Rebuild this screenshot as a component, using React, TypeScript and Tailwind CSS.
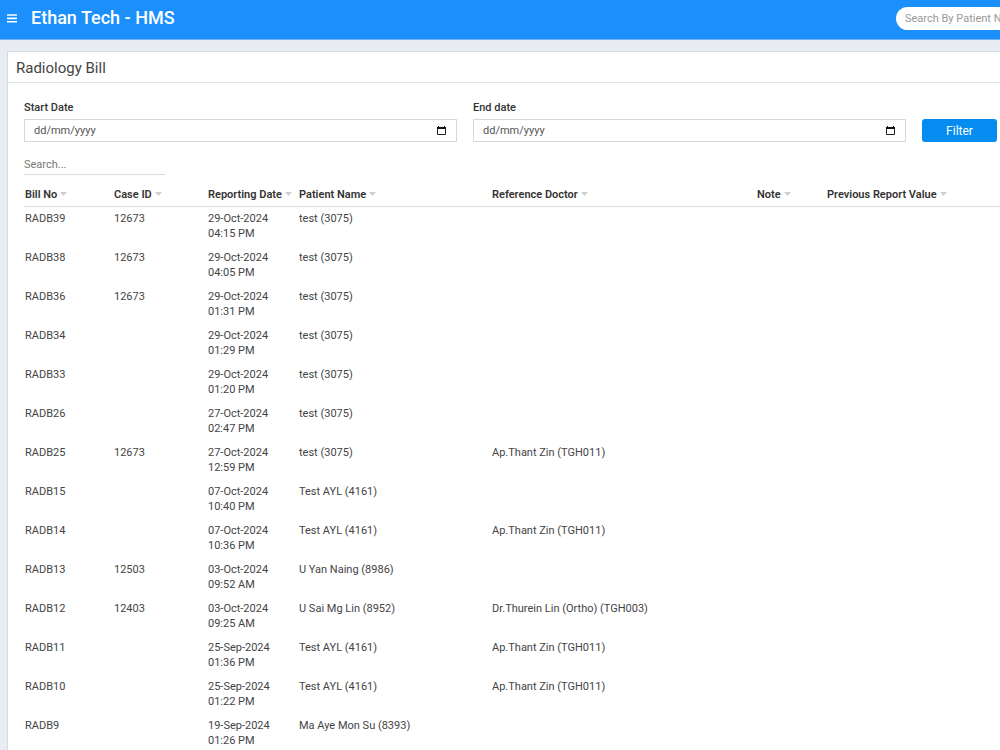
type Bill = {
  billNo: string;
  caseId?: string;
  date: string;
  time: string;
  patient: string;
  doctor?: string;
};

const bills: Bill[] = [
  { billNo: "RADB39", caseId: "12673", date: "29-Oct-2024", time: "04:15 PM", patient: "test (3075)" },
  { billNo: "RADB38", caseId: "12673", date: "29-Oct-2024", time: "04:05 PM", patient: "test (3075)" },
  { billNo: "RADB36", caseId: "12673", date: "29-Oct-2024", time: "01:31 PM", patient: "test (3075)" },
  { billNo: "RADB34", date: "29-Oct-2024", time: "01:29 PM", patient: "test (3075)" },
  { billNo: "RADB33", date: "29-Oct-2024", time: "01:20 PM", patient: "test (3075)" },
  { billNo: "RADB26", date: "27-Oct-2024", time: "02:47 PM", patient: "test (3075)" },
  { billNo: "RADB25", caseId: "12673", date: "27-Oct-2024", time: "12:59 PM", patient: "test (3075)", doctor: "Ap.Thant Zin (TGH011)" },
  { billNo: "RADB15", date: "07-Oct-2024", time: "10:40 PM", patient: "Test AYL (4161)" },
  { billNo: "RADB14", date: "07-Oct-2024", time: "10:36 PM", patient: "Test AYL (4161)", doctor: "Ap.Thant Zin (TGH011)" },
  { billNo: "RADB13", caseId: "12503", date: "03-Oct-2024", time: "09:52 AM", patient: "U Yan Naing (8986)" },
  { billNo: "RADB12", caseId: "12403", date: "03-Oct-2024", time: "09:25 AM", patient: "U Sai Mg Lin (8952)", doctor: "Dr.Thurein Lin (Ortho) (TGH003)" },
  { billNo: "RADB11", date: "25-Sep-2024", time: "01:36 PM", patient: "Test AYL (4161)", doctor: "Ap.Thant Zin (TGH011)" },
  { billNo: "RADB10", date: "25-Sep-2024", time: "01:22 PM", patient: "Test AYL (4161)", doctor: "Ap.Thant Zin (TGH011)" },
  { billNo: "RADB9", date: "19-Sep-2024", time: "01:26 PM", patient: "Ma Aye Mon Su (8393)" },
];

const columns = [
  { label: "Bill No", width: "w-[89px]" },
  { label: "Case ID", width: "w-[94px]" },
  { label: "Reporting Date", width: "w-[91px]" },
  { label: "Patient Name", width: "w-[193px]" },
  { label: "Reference Doctor", width: "w-[265px]" },
  { label: "Note", width: "w-[70px]" },
  { label: "Previous Report Value", width: "w-auto" },
];

function DateField({ id, label }: { id: string; label: string }) {
  return (
    <div className="flex min-w-0 flex-1 flex-col gap-[3px]">
      <label htmlFor={id} className="text-[11px] leading-4 font-medium text-[#333]">
        {label}
      </label>
      <div className="flex h-[23px] items-center border border-[#d5d9df] bg-white pr-[10px] pl-[9px]">
        <input
          id={id}
          type="text"
          placeholder="dd/mm/yyyy"
          className="h-full min-w-0 flex-1 text-[11px] text-[#555] outline-none placeholder:text-[#555]"
        />
        <button type="button" aria-label={`Pick ${label}`}>
          <svg width="9" height="10" viewBox="0 0 9 10" fill="none" className="block">
            <path d="M.5 1.5h8v7h-8z" stroke="#222" />
            <path d="M0 1h9v2H0zM1 0h1v1H1zM7 0h1v1H7z" fill="#111" />
          </svg>
        </button>
      </div>
    </div>
  );
}

function Header() {
  return (
    <header className="flex h-10 items-start justify-between border-b border-[#6db2f5] bg-[#1b8ffb]">
      <div className="flex h-9 items-center gap-[14px] pl-[7px]">
        <button type="button" aria-label="Toggle menu">
          <svg width="10" height="9" viewBox="0 0 10 9" fill="#fff" className="block">
            <path d="M0 .2h10v1.6H0zM0 3.6h10v1.6H0zM0 7h10v1.6H0z" />
          </svg>
        </button>
        <a href="#home" className="text-lg font-medium text-white">
          Ethan Tech - HMS
        </a>
      </div>
      <input
        type="text"
        aria-label="Search By Patient Name"
        placeholder="Search By Patient Name"
        className="mt-[7px] h-[23px] w-[104px] rounded-l-full bg-white pl-[9px] text-[11px] outline-none placeholder:text-[#999]"
      />
    </header>
  );
}

function BillTable() {
  return (
    <table className="w-full table-fixed text-left text-[11px] leading-[15px] text-[#444]">
      <thead>
        <tr className="border-b border-[#dcdcdc]">
          {columns.map((col) => (
            <th key={col.label} className={`${col.width} py-0 pl-px font-semibold text-[#333]`}>
              <button type="button" className="flex h-6 items-center gap-[3px] whitespace-nowrap">
                {col.label}
                <svg width="7" height="4" viewBox="0 0 7 4" fill="#cfcfcf">
                  <path d="M0 0h7L3.5 4z" />
                </svg>
              </button>
            </th>
          ))}
        </tr>
      </thead>
      <tbody>
        {bills.map((bill) => (
          <tr key={bill.billNo} className="align-top">
            <td className="pt-1 pb-[5px] pl-px">{bill.billNo}</td>
            <td className="pt-1 pb-[5px] pl-px">{bill.caseId}</td>
            <td className="pt-1 pb-[5px] pl-px">
              {bill.date}
              <br />
              {bill.time}
            </td>
            <td className="pt-1 pb-[5px] pl-px">{bill.patient}</td>
            <td className="pt-1 pb-[5px] pl-px">{bill.doctor}</td>
            <td />
            <td />
          </tr>
        ))}
      </tbody>
    </table>
  );
}

export default function App() {
  return (
    <div className="flex h-screen flex-col overflow-hidden bg-[#e9ecf2] font-[Roboto,sans-serif]">
      <Header />
      <main className="mt-[11px] ml-[7px] flex-1 overflow-hidden border-t border-l border-[#cbdde3] bg-white">
        <h1 className="border-b border-[#dde8ec] pt-0.5 pl-2 text-[15px] leading-7 text-[#444]">
          Radiology Bill
        </h1>
        <div className="pt-[17px] pl-4">
          {/* Filters */}
          <form className="flex items-end gap-4 pr-[3px]">
            <DateField id="start-date" label="Start Date" />
            <DateField id="end-date" label="End date" />
            <button
              type="button"
              className="h-[23px] w-[75px] rounded-[3px] bg-[#048cf0] text-xs text-white"
            >
              Filter
            </button>
          </form>

          <input
            type="text"
            aria-label="Search bills"
            placeholder="Search..."
            className="mt-3 block h-[21px] w-[141px] border-b border-[#dcdcdc] text-[11px] outline-none placeholder:text-[#777]"
          />
          <div className="pt-[7px]">
            <BillTable />
          </div>
        </div>
      </main>
    </div>
  );
}
